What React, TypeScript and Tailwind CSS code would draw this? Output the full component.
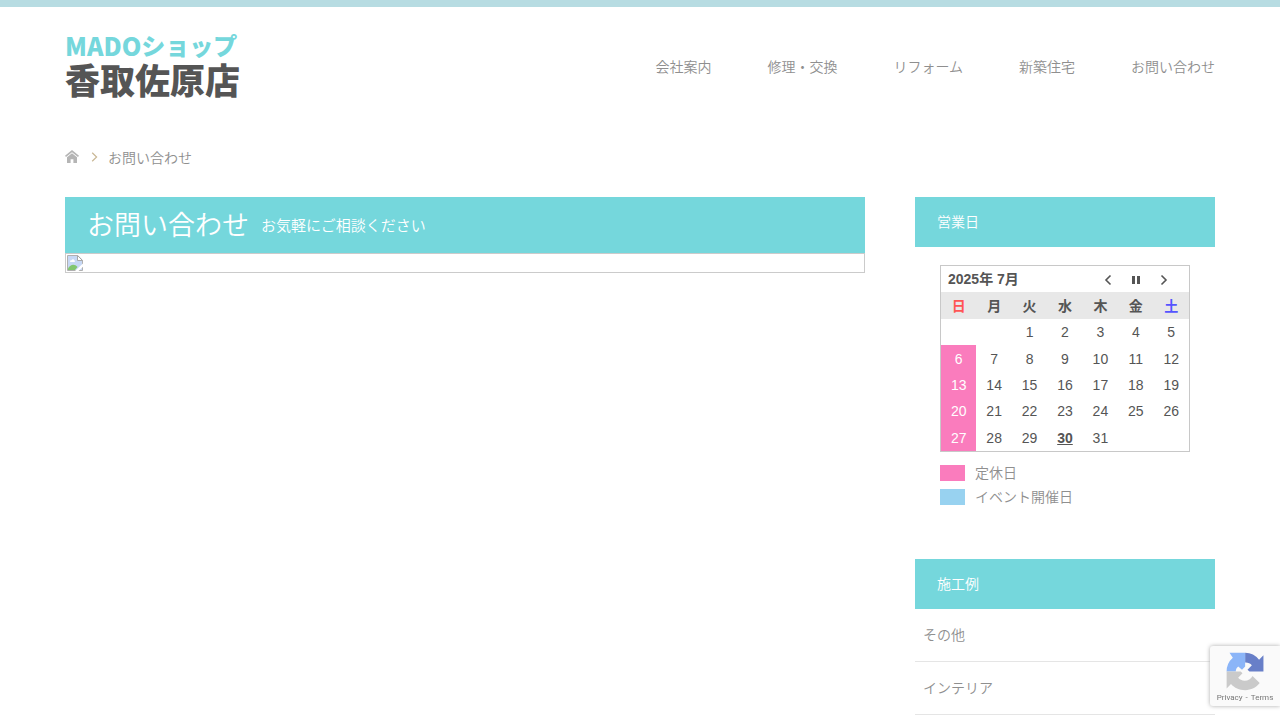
const navItems = ["会社案内", "修理・交換", "リフォーム", "新築住宅", "お問い合わせ"];

const weekdays = [
  { label: "日", color: "text-[#ff5555]" },
  { label: "月", color: "" },
  { label: "火", color: "" },
  { label: "水", color: "" },
  { label: "木", color: "" },
  { label: "金", color: "" },
  { label: "土", color: "text-[#5555ff]" },
];

const weeks: (number | null)[][] = [
  [null, null, 1, 2, 3, 4, 5],
  [6, 7, 8, 9, 10, 11, 12],
  [13, 14, 15, 16, 17, 18, 19],
  [20, 21, 22, 23, 24, 25, 26],
  [27, 28, 29, 30, 31, null, null],
];

const TODAY = 30;

function dayClass(day: number | null, column: number) {
  if (day === null) return "p-0";
  if (column === 0) return "bg-[#fa7cbd] p-0 text-white";
  if (day === TODAY) return "p-0 font-bold underline";
  return "p-0";
}

function Logo() {
  return (
    <a
      href="#"
      className="flex flex-col pb-[3px] font-['Noto_Sans_CJK_JP',sans-serif] whitespace-nowrap"
    >
      <span className="flex h-7 items-center font-black text-[#75d7dc]">
        <span className="text-[25px] leading-7">MADO</span>
        <span className="text-2xl leading-7">ショップ</span>
      </span>
      <span className="text-[35px] leading-[40px] font-black text-[#555555]">香取佐原店</span>
    </a>
  );
}

function Header() {
  return (
    <header className="flex h-[119px] items-center justify-between">
      <Logo />
      <nav>
        <ul className="flex gap-14">
          {navItems.map((item) => (
            <li key={item}>
              <a href="#">{item}</a>
            </li>
          ))}
        </ul>
      </nav>
    </header>
  );
}

function Breadcrumb() {
  return (
    <nav aria-label="パンくず" className="flex h-[71px] items-start pt-[22px]">
      <ol className="flex items-center leading-5">
        <li className="pb-[3px]">
          <a href="#" aria-label="ホーム" className="block">
            <svg viewBox="0 0 14 13" className="h-[13px] w-[14px]" fill="#b5b5b5">
              <path d="M7 0 0 5.700l1 1.400L7 2.300l6 4.800 1-1.400z" />
              <path d="M7 3.200 2 7.200V13h3.600V9.200h2.800V13H12V7.200z" />
            </svg>
          </a>
        </li>
        <li aria-hidden="true" className="mr-[10px] ml-[12px] pb-[3px]">
          <svg viewBox="0 0 7 10" className="h-[10px] w-[7px]" fill="none" stroke="#c9b795">
            <path d="M1.200 .8 5.600 5 1.200 9.200" strokeWidth="1.200" />
          </svg>
        </li>
        <li>お問い合わせ</li>
      </ol>
    </nav>
  );
}

function MissingImage() {
  return (
    <div className="border border-[#cbcbcb] p-px">
      <svg viewBox="0 0 16 16" className="block h-4 w-4" aria-hidden="true">
        <path d="M.5.5h10.200l4.800 4.800v10.200H.5z" fill="#c7d8f5" stroke="#b0b0b0" />
        <path d="M1 15v-1.600C3.600 9 7.500 8.500 10.500 12L8 15z" fill="#82c66f" />
        <path d="M3 6.500c0-1 .8-1.500 1.600-1.300C5 3.900 7 4 7.200 5.300c1 0 1.200 1.700 0 1.700H3.600C3.200 7 3 6.800 3 6.500z" fill="#fff" />
        <path d="M10.500.5v5h5z" fill="#fff" stroke="#a7a7a7" />
        <path d="M16 8.500 8 16h3.500l4.500-4.200z" fill="#fff" />
      </svg>
    </div>
  );
}

function Calendar() {
  return (
    <div className="px-[25px] pt-[18px]">
      <div className="border border-[#c8c8c8] text-[#555555]">
        <div className="flex h-[26px] items-center justify-between pr-[21px] pl-[7px]">
          <h3 className="font-bold">2025年 7月</h3>
          <div className="flex items-center gap-5 pt-0.5">
            <button type="button" aria-label="前月">
              <svg viewBox="0 0 8 12" className="h-3 w-2" fill="none" stroke="#555">
                <path d="M6.500 1.500 2 6l4.500 4.500" strokeWidth="1.600" />
              </svg>
            </button>
            <button type="button" aria-label="今月">
              <svg viewBox="0 0 8 8" className="h-2 w-2" fill="#555">
                <path d="M0 0h3v8H0zM5 0h3v8H5z" />
              </svg>
            </button>
            <button type="button" aria-label="翌月">
              <svg viewBox="0 0 8 12" className="h-3 w-2" fill="none" stroke="#555">
                <path d="M1.500 1.500 6 6l-4.500 4.500" strokeWidth="1.600" />
              </svg>
            </button>
          </div>
        </div>
        <table className="h-[159px] w-full table-fixed border-collapse text-center leading-5">
          <thead>
            <tr className="h-[27px] bg-[#e8e8e8]">
              {weekdays.map((d) => (
                <th key={d.label} scope="col" className={`p-0 font-bold ${d.color}`}>
                  {d.label}
                </th>
              ))}
            </tr>
          </thead>
          <tbody>
            {weeks.map((week, i) => (
              <tr key={i}>
                {week.map((day, col) => (
                  <td key={col} className={dayClass(day, col)}>
                    {day}
                  </td>
                ))}
              </tr>
            ))}
          </tbody>
        </table>
      </div>
      <ul className="mt-[9px]">
        <li className="flex h-6 items-center gap-[10px]">
          <span className="h-4 w-[25px] bg-[#fa7cbd]" />
          定休日
        </li>
        <li className="flex h-6 items-center gap-[10px]">
          <span className="h-4 w-[25px] bg-[#98d2f0]" />
          イベント開催日
        </li>
      </ul>
    </div>
  );
}

function WidgetTitle({ children }: { children: string }) {
  return (
    <h2 className="flex h-[50px] items-center bg-[#75d7dc] px-[22px] font-[350] text-white">
      {children}
    </h2>
  );
}

function RecaptchaBadge() {
  return (
    <div className="fixed right-0 bottom-[14px] flex h-[60px] w-[70px] flex-col items-center rounded-l-[3px] bg-[#fafafa] pt-1.5 font-normal shadow-[0_0_4px_#aaa]">
      <svg viewBox="0 0 64 64" className="h-10 w-10" aria-hidden="true">
        <path d="M61.500 31V5.200l-7 7A29 29 0 0 0 32.200 1v15.800c4.400-.2 8.300 1.200 10.800 4.500L36 28.400l3.200 2.600z" fill="#687fc8" />
        <path d="M32.200 1H7.200l5.300 8A29 29 0 0 0 2.600 31h14.600c.2-3.800 1.500-6 4-8l6 5.500 5-5.500z" fill="#8bb5f8" />
        <path d="M2.600 31v27.500l7-7.200C15 57.600 23 61 32.200 61c9.500 0 18-4.300 23.300-11.300L44 38.200c-2.500 4.500-7 7.600-12.500 7.600-4.500 0-8-1.600-10.500-4.500l7-7.300-3-3z" fill="#cacaca" />
      </svg>
      <div className="flex gap-[3px] font-[Roboto,sans-serif] text-[8px] leading-[11px] whitespace-nowrap text-[#777777]">
        <a href="#">Privacy</a>
        <span>-</span>
        <a href="#">Terms</a>
      </div>
    </div>
  );
}

export default function App() {
  return (
    <div className="border-t-[7px] border-[#b7dce2] bg-white font-['Liberation_Sans','Noto_Sans_CJK_JP',sans-serif] text-sm font-[350] text-[#8f8f8f]">
      <div className="mx-auto max-w-[1150px]">
        <Header />
        <Breadcrumb />
        <div className="flex items-start gap-[50px]">
          <main className="min-w-0 flex-1">
            <div className="flex h-14 items-center gap-3 bg-[#75d7dc] px-[22px] pt-0.5 text-white">
              <h1 className="text-[27px] leading-10 font-[350]">お問い合わせ</h1>
              <p className="text-[15px]">お気軽にご相談ください</p>
            </div>
            <MissingImage />
          </main>
          <aside className="w-[300px] shrink-0">
            <section className="mb-[50px]">
              <WidgetTitle>営業日</WidgetTitle>
              <Calendar />
            </section>
            <section>
              <WidgetTitle>施工例</WidgetTitle>
              <ul>
                {["その他", "インテリア"].map((item) => (
                  <li key={item} className="border-b border-[#e5e5e5]">
                    <a href="#" className="flex h-[52px] items-center px-2">
                      {item}
                    </a>
                  </li>
                ))}
              </ul>
            </section>
          </aside>
        </div>
      </div>
      <RecaptchaBadge />
    </div>
  );
}
